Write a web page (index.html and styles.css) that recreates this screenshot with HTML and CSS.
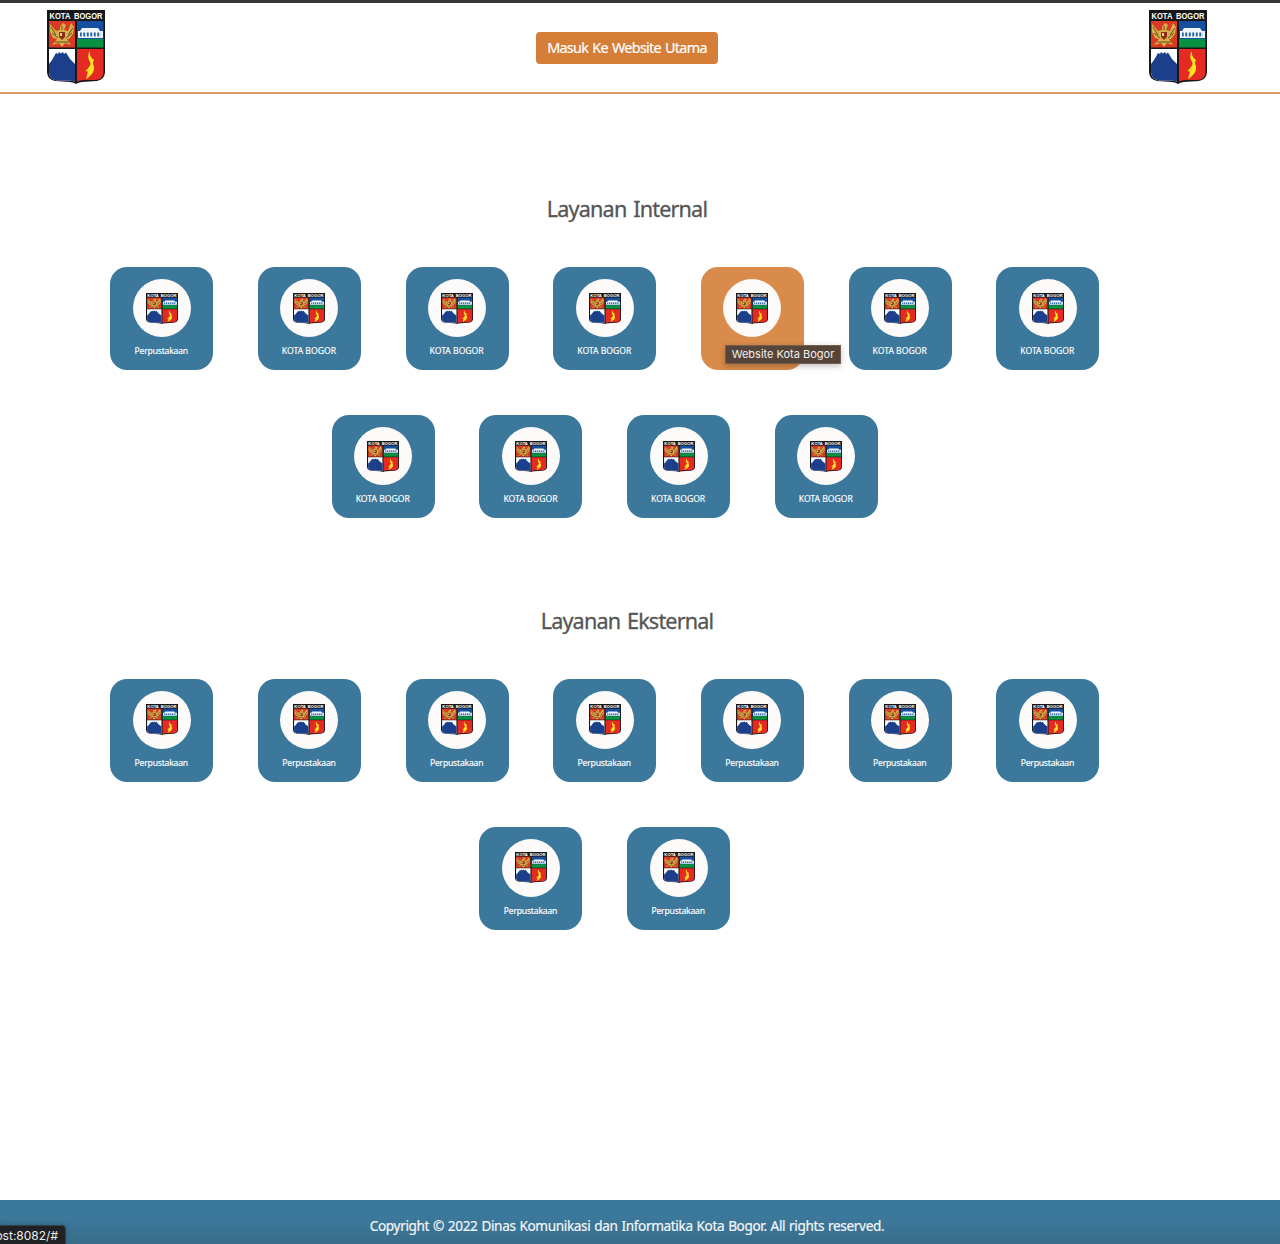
FILE: index.html
```html
<!DOCTYPE html>
<html lang="id">
<head>
<meta charset="utf-8">
<title>Layanan Kota Bogor</title>
<link rel="stylesheet" href="styles.css">
</head>
<body>
<svg class="defs" aria-hidden="true">
  <symbol id="crest" viewBox="0 0 58 74" preserveAspectRatio="none">
    <path d="M0 0H58V62Q58 69 50 71L35 72Q31 72.500 29 74Q27 72.500 23 72L8 71Q0 69 0 62Z" fill="#171719"/>
    <path d="M2 11H28V37.500H2Z" fill="#d93a24"/>
    <path d="M30 11H56.500V30H30Z" fill="#164f9f"/>
    <path d="M30 29H56.500V37.500H30Z" fill="#079140"/>
    <path d="M2 39H28V71.500Q25 70.500 19 70.500H10Q2 69.500 2 62Z" fill="#fff"/>
    <path d="M30 39H56.500V62Q56.500 69 49 70H38Q33 70 30 71.500Z" fill="#e52a22"/>
    <path d="M2 54L5 50L9 43L11 44L12 42L14 43.500L16 42L17 44L19 42.500L23 49L28 54V71.500Q25 70.500 19 70.500H10Q2 69.500 2 62Z" fill="#1c3f8c"/>
    <path d="M13 17L16 13L19 15L17 20L21 21L24 13L27 17L26 24L22 29L20 29L24 35L18 33L15 37L12 33L5 35L10 29L6 28L3 22L3 14L9 21L13 20Z" fill="#d8b04a"/>
    <path d="M4 17L9 25M5 23L11 28M26 18L21 25M25 23L19 28M15 16V20M8 32H22" stroke="#654d22" fill="none"/>
    <path d="M12 22H18V27L15 30L12 27Z" fill="#8f2b1d"/>
    <path d="M13 23H15V26H13Z" fill="#f2d77c"/>
    <path d="M35 18H51L53 21H56V28H31V21H33Z" fill="#edf5fa"/>
    <path d="M33 22.500H54V26.500H33Z" fill="#2865a5"/>
    <path d="M35.500 22V27M39 22V27M42.500 22V27M46 22V27M49.500 22V27M53 22V27" stroke="#fff" stroke-width="1.500"/>
    <path d="M43 41Q40 45 42 50Q45 54 42 57Q40 60 38 61L41 61.500L39 69L42 67Q48 62 47 56Q45 53 47 50Q42 47 43 41Z" fill="#fbe321"/>
    <text x="29" y="8.600" text-anchor="middle" textLength="53" lengthAdjust="spacingAndGlyphs" class="crest-text">KOTA BOGOR</text>
  </symbol>
</svg>
<header class="header">
  <svg class="crest"><use href="#crest"/></svg>
  <a class="main-link">Masuk Ke Website Utama</a>
  <svg class="crest"><use href="#crest"/></svg>
</header>
<main class="main">
  <section class="section">
    <h2 class="title">Layanan Internal</h2>
    <div class="cards">
      <a class="card"><span class="disc"><svg class="mini"><use href="#crest"/></svg></span><span class="label label-long">Perpustakaan</span></a>
      <a class="card"><span class="disc"><svg class="mini"><use href="#crest"/></svg></span><span class="label">KOTA BOGOR</span></a>
      <a class="card"><span class="disc"><svg class="mini"><use href="#crest"/></svg></span><span class="label">KOTA BOGOR</span></a>
      <a class="card"><span class="disc"><svg class="mini"><use href="#crest"/></svg></span><span class="label">KOTA BOGOR</span></a>
      <a class="card card-active"><span class="disc"><svg class="mini"><use href="#crest"/></svg></span><span class="tooltip">Website Kota Bogor</span></a>
      <a class="card"><span class="disc"><svg class="mini"><use href="#crest"/></svg></span><span class="label">KOTA BOGOR</span></a>
      <a class="card"><span class="disc"><svg class="mini"><use href="#crest"/></svg></span><span class="label">KOTA BOGOR</span></a>
      <a class="card"><span class="disc"><svg class="mini"><use href="#crest"/></svg></span><span class="label">KOTA BOGOR</span></a>
      <a class="card"><span class="disc"><svg class="mini"><use href="#crest"/></svg></span><span class="label">KOTA BOGOR</span></a>
      <a class="card"><span class="disc"><svg class="mini"><use href="#crest"/></svg></span><span class="label">KOTA BOGOR</span></a>
      <a class="card"><span class="disc"><svg class="mini"><use href="#crest"/></svg></span><span class="label">KOTA BOGOR</span></a>
    </div>
  </section>
  <section class="section">
    <h2 class="title">Layanan Eksternal</h2>
    <div class="cards">
      <a class="card"><span class="disc"><svg class="mini"><use href="#crest"/></svg></span><span class="label label-long">Perpustakaan</span></a>
      <a class="card"><span class="disc"><svg class="mini"><use href="#crest"/></svg></span><span class="label label-long">Perpustakaan</span></a>
      <a class="card"><span class="disc"><svg class="mini"><use href="#crest"/></svg></span><span class="label label-long">Perpustakaan</span></a>
      <a class="card"><span class="disc"><svg class="mini"><use href="#crest"/></svg></span><span class="label label-long">Perpustakaan</span></a>
      <a class="card"><span class="disc"><svg class="mini"><use href="#crest"/></svg></span><span class="label label-long">Perpustakaan</span></a>
      <a class="card"><span class="disc"><svg class="mini"><use href="#crest"/></svg></span><span class="label label-long">Perpustakaan</span></a>
      <a class="card"><span class="disc"><svg class="mini"><use href="#crest"/></svg></span><span class="label label-long">Perpustakaan</span></a>
      <a class="card"><span class="disc"><svg class="mini"><use href="#crest"/></svg></span><span class="label label-long">Perpustakaan</span></a>
      <a class="card"><span class="disc"><svg class="mini"><use href="#crest"/></svg></span><span class="label label-long">Perpustakaan</span></a>
    </div>
  </section>
</main>
<footer class="footer">
  <span class="copyright">Copyright © 2022 Dinas Komunikasi dan Informatika Kota Bogor. All rights reserved.</span>
</footer>
<div class="status">ost:8082/#</div>
</body>
</html>
```
FILE: styles.css
```css
* { box-sizing: border-box; }
body {
  margin: 0;
  height: 1244px;
  display: flex;
  flex-direction: column;
  position: relative;
  overflow: hidden;
  background: #fff;
  font-family: "Noto Sans", sans-serif;
}
.defs { position: absolute; width: 0; height: 0; }
.crest-text { font: bold 8.500px "Liberation Sans", sans-serif; word-spacing: 2px; fill: #fff; }
.header {
  height: 94px;
  flex: none;
  display: flex;
  justify-content: space-between;
  align-items: flex-start;
  padding: 7px 73px 0 47px;
  border-top: 3px solid #38363a;
  border-bottom: 2px solid #dc9a6c;
}
.crest { width: 58px; height: 74px; }
.main-link {
  width: 182px;
  height: 32px;
  margin-top: 22px;
  border-radius: 4px;
  background: #d57e37;
  color: #fff;
  font-size: 14.400px;
  letter-spacing: -.7px;
  word-spacing: 1px;
  -webkit-text-stroke: .2px;
  line-height: 32px;
  text-align: center;
  white-space: nowrap;
}
.main { flex: 1; padding-top: 96px; }
.section { height: 411.500px; }
.title {
  margin: 0;
  padding-right: 26px;
  height: 77.450px;
  color: #555;
  font-size: 21.600px;
  letter-spacing: -.83px;
  word-spacing: 2px;
  -webkit-text-stroke: .3px;
  font-weight: 400;
  line-height: 38px;
  text-align: center;
}
.cards {
  width: 1034px;
  margin-left: 87.800px;
  display: flex;
  flex-wrap: wrap;
  justify-content: center;
  gap: 44.700px;
}
.card {
  position: relative;
  width: 103px;
  height: 103px;
  padding-top: 12px;
  border-radius: 17px;
  background: #3c789b;
  display: flex;
  flex-direction: column;
  align-items: center;
}
.card-active { background: #d98b4c; }
.disc {
  width: 58px;
  height: 58px;
  border-radius: 50%;
  background: #fdfbfa;
  display: flex;
  align-items: center;
  justify-content: center;
}
.mini { width: 32px; height: 31px; }
.label {
  margin-top: 7px;
  padding-right: 1px;
  color: #fff;
  font-size: 8.600px;
  -webkit-text-stroke: .15px;
  line-height: 14px;
  white-space: nowrap;
}
.label-long { letter-spacing: -.2px; }
.tooltip {
  position: absolute;
  z-index: 1;
  left: 24px;
  top: 77.500px;
  width: 116px;
  height: 19px;
  border: 1px solid #75604f;
  background: #54443a;
  box-shadow: 0 2px 6px rgba(0, 0, 0, .25);
  color: #f3efeb;
  font: 11px/17px Inter, sans-serif;
  text-align: center;
  white-space: nowrap;
}
.footer {
  height: 44px;
  flex: none;
  padding: 14px 26px 0 0;
  background: linear-gradient(#3c789b 40%, #396d8b);
  color: #f3f6f8;
  font-size: 13.600px;
  letter-spacing: -.36px;
  word-spacing: .7px;
  -webkit-text-stroke: .2px;
  line-height: 24px;
  text-align: center;
}
.status {
  position: absolute;
  left: 0;
  bottom: 0;
  width: 66px;
  height: 19px;
  padding-right: 7px;
  display: flex;
  justify-content: flex-end;
  overflow: hidden;
  border-top: 1px solid #3a4249;
  border-right: 1px solid #3a4249;
  border-radius: 0 4px 0 0;
  background: #202124;
  box-shadow: 0 0 6px rgba(0, 0, 0, .2);
  color: #eee;
  font: 12px/20px Inter, sans-serif;
}
```
